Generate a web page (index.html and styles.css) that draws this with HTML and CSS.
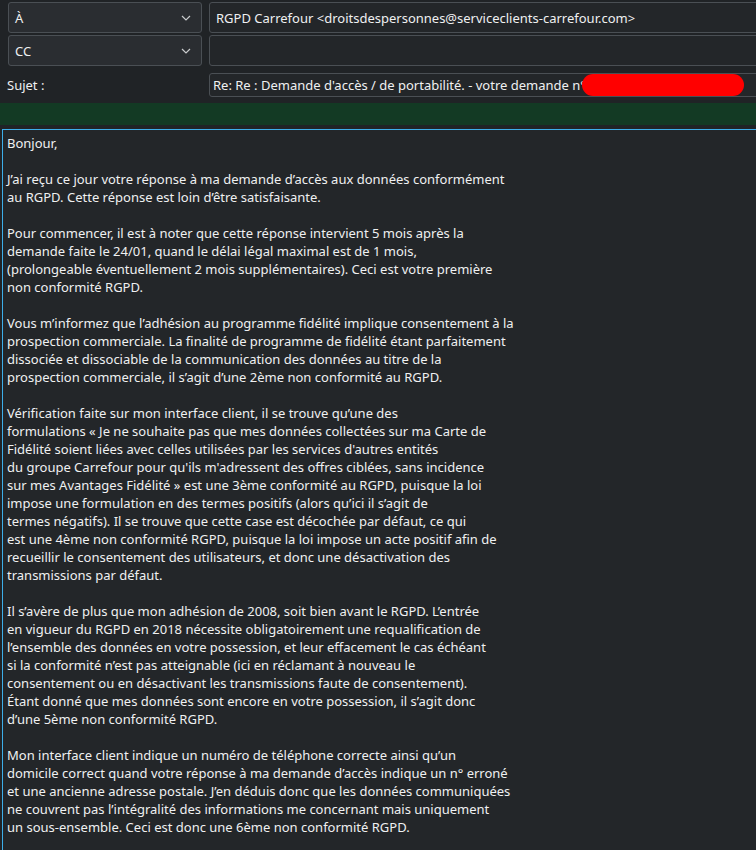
FILE: index.html
```html
<!DOCTYPE html>
<html lang="fr">
<head>
<meta charset="utf-8">
<link rel="stylesheet" href="styles.css">
</head>
<body>
<div class="window">
  <div class="headers">
    <div class="combo"><span>À</span><svg class="chev" width="10" height="6" viewBox="0 0 10 6"><path d="M1 1 L5 5 L9 1" fill="none" stroke="#c8cacc" stroke-width="1.2"/></svg></div>
    <div class="field">RGPD Carrefour &lt;droitsdespersonnes@serviceclients-carrefour.com&gt;</div>
    <div class="combo"><span>CC</span><svg class="chev" width="10" height="6" viewBox="0 0 10 6"><path d="M1 1 L5 5 L9 1" fill="none" stroke="#c8cacc" stroke-width="1.2"/></svg></div>
    <div class="field"></div>
    <div class="label">Sujet :</div>
    <div class="field subject">Re: Re : Demande d'accès / de portabilité. - votre demande n°<span class="redact"></span></div>
  </div>
  <div class="greenbar"></div>
  <div class="editor">
    <p>Bonjour,</p>
    <p>J’ai reçu ce jour votre réponse à ma demande d’accès aux données conformément<br>au RGPD. Cette réponse est loin d’être satisfaisante.</p>
    <p>Pour commencer, il est à noter que cette réponse intervient 5 mois après la<br>demande faite le 24/01, quand le délai légal maximal est de 1 mois,<br>(prolongeable éventuellement 2 mois supplémentaires). Ceci est votre première<br>non conformité RGPD.</p>
    <p>Vous m’informez que l’adhésion au programme fidélité implique consentement à la<br>prospection commerciale. La finalité de programme de fidélité étant parfaitement<br>dissociée et dissociable de la communication des données au titre de la<br>prospection commerciale, il s’agit d’une 2ème non conformité au RGPD.</p>
    <p>Vérification faite sur mon interface client, il se trouve qu’une des<br>formulations « Je ne souhaite pas que mes données collectées sur ma Carte de<br>Fidélité soient liées avec celles utilisées par les services d'autres entités<br>du groupe Carrefour pour qu'ils m'adressent des offres ciblées, sans incidence<br>sur mes Avantages Fidélité » est une 3ème conformité au RGPD, puisque la loi<br>impose une formulation en des termes positifs (alors qu’ici il s’agit de<br>termes négatifs). Il se trouve que cette case est décochée par défaut, ce qui<br>est une 4ème non conformité RGPD, puisque la loi impose un acte positif afin de<br>recueillir le consentement des utilisateurs, et donc une désactivation des<br>transmissions par défaut.</p>
    <p>Il s’avère de plus que mon adhésion de 2008, soit bien avant le RGPD. L’entrée<br>en vigueur du RGPD en 2018 nécessite obligatoirement une requalification de<br>l’ensemble des données en votre possession, et leur effacement le cas échéant<br>si la conformité n’est pas atteignable (ici en réclamant à nouveau le<br>consentement ou en désactivant les transmissions faute de consentement).<br>Étant donné que mes données sont encore en votre possession, il s’agit donc<br>d’une 5ème non conformité RGPD.</p>
    <p>Mon interface client indique un numéro de téléphone correcte ainsi qu’un<br>domicile correct quand votre réponse à ma demande d’accès indique un n° erroné<br>et une ancienne adresse postale. J’en déduis donc que les données communiquées<br>ne couvrent pas l’intégralité des informations me concernant mais uniquement<br>un sous-ensemble. Ceci est donc une 6ème non conformité RGPD.</p>
  </div>
</div>
</body>
</html>
```

FILE: styles.css
```css
html, body {
  margin: 0;
  padding: 0;
  background: #202326;
  overflow: hidden;
  height: 850px;
}
.window {
  width: 770px;
  height: 850px;
  overflow: hidden;
  font-family: "Noto Sans", sans-serif;
  font-size: 13px;
  color: #eff0f1;
  padding-top: 2px;
  box-sizing: border-box;
}
.headers {
  display: grid;
  grid-template-columns: 194px 1fr;
  column-gap: 7px;
  row-gap: 2px;
  margin-left: 8px;
  grid-template-rows: 31px 31px 30px;
}
.combo {
  background: #2a2d31;
  border: 1px solid #4a4f54;
  border-radius: 3px;
  display: flex;
  align-items: center;
  justify-content: space-between;
  padding: 0 10px 0 6px;
  box-sizing: border-box;
}
.chev { display: block; }
.field {
  background: #232629;
  border: 1px solid #4a4f54;
  border-radius: 3px;
  display: flex;
  align-items: center;
  padding: 0 6px;
  box-sizing: border-box;
  white-space: nowrap;
}
.label {
  align-self: center;
  margin-left: -1px;
  margin-top: 3px;
}
.subject {
  margin-top: 5px;
  padding-left: 3px;
  height: 24px;
}
.redact {
  display: inline-block;
  width: 162px;
  height: 22px;
  background: #ff0000;
  border-radius: 11px;
  margin-left: -4px;
}
.greenbar {
  margin-top: 5px;
  height: 22px;
  background: #133a24;
}
.editor {
  margin-top: 4px;
  margin-left: 2px;
  border: 1px solid #3daee9;
  border-right: none;
  border-bottom: none;
  background: #232629;
  padding: 4px 0 0 4px;
  height: 721px;
  box-sizing: border-box;
  line-height: 18px;
  white-space: nowrap;
  overflow: hidden;
}
.editor p {
  margin: 0 0 18px 0;
}
```
